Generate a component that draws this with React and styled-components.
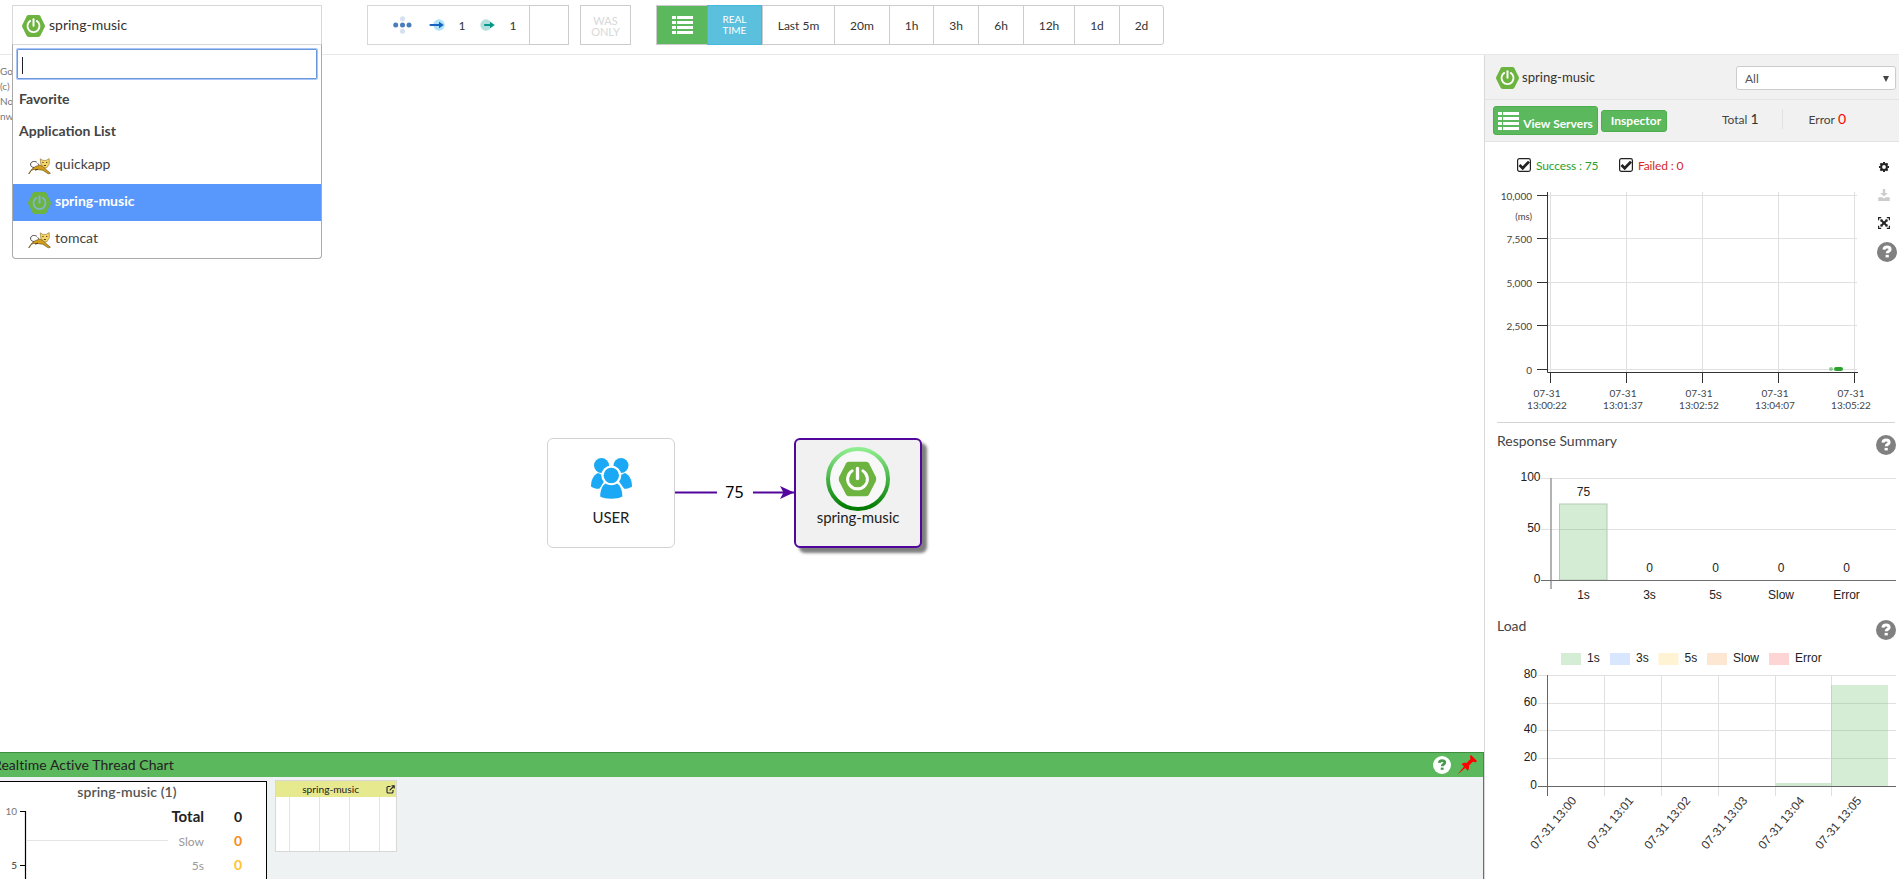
import React from "react";
import styled, { createGlobalStyle, css } from "styled-components";

const Global = createGlobalStyle`
  *, *::before, *::after { box-sizing: border-box; }
  html, body { margin: 0; height: 100%; overflow: hidden; }
  body { font-family: Lato, "Liberation Sans", sans-serif; font-size: 14px; color: #444; background: #fff; }
`;

const Page = styled.div`
  width: 1899px;
  height: 879px;
  display: flex;
  flex-direction: column;
  overflow: hidden;
`;

/* ---------- header ---------- */
const Header = styled.header`
  height: 55px;
  flex: none;
  display: flex;
  align-items: flex-start;
  padding: 5px 0 0 12px;
  border-bottom: 1px solid #e8e8e8;
`;

const AppSelect = styled.div`
  position: relative;
  width: 310px;
  height: 40px;
  z-index: 5;
`;

const AppCurrent = styled.div`
  height: 40px;
  display: flex;
  align-items: center;
  gap: 4px;
  padding: 2px 0 0 9px;
  border: 1px solid #d8d8d8;
  font-size: 14px;
  line-height: 20px;
  color: #333;

  span { margin-top: -2px; }
`;

const Menu = styled.div`
  position: absolute;
  top: 39px;
  left: 0;
  width: 310px;
  height: 215px;
  padding-top: 4px;
  background: #fff;
  border: 1px solid #aaa;
  border-top-color: #d8d8d8;
  border-radius: 0 0 4px 4px;
  overflow: hidden;
`;

const SearchBox = styled.div`
  width: 300px;
  height: 30px;
  margin-left: 4px;
  padding: 7px 0 0 4px;
  border: 1px solid #6c96dc;
  border-radius: 1px;
  box-shadow: 0 0 0 1px #a9c6f7;
`;

const Caret = styled.div`
  width: 1px;
  height: 17px;
  background: #222;
`;

const MenuGroup = styled.div`
  height: 32px;
  padding: 10px 0 0 6px;
  font-weight: 700;
  font-size: 14px;
  line-height: 20px;
`;

const MenuItem = styled.div`
  height: 37px;
  display: flex;
  align-items: center;
  gap: 4px;
  padding-left: 15px;
  line-height: 20px;
  ${(p) =>
    p.$active &&
    css`
      background: #5897fb;
      color: #fff;
      font-weight: 700;
    `}
  span { margin-top: -3px; }
  svg { margin-top: 1px; }
`;

const MenuItems = styled.div`
  padding-top: 4px;
`;

const CounterBox = styled.div`
  width: 202px;
  height: 40px;
  margin-left: 45px;
  display: flex;
  border: 1px solid #d8d8d8;
  font-size: 12px;
  color: #333;
`;

const Counters = styled.div`
  flex: 1;
  display: flex;
  align-items: center;
  padding-left: 25px;

  svg { flex: none; }
  span { width: 8px; text-align: center; }
  span + svg { margin-left: 14px; }
  svg + svg { margin-left: 17px; }
  svg + span { margin-left: 13px; }
`;

const EmptyCell = styled.div`
  width: 40px;
  height: 40px;
  margin: -1px;
  border: 1px solid #ccc;
`;

const WasOnly = styled.div`
  width: 51px;
  height: 40px;
  margin-left: 11px;
  padding-top: 9px;
  border: 1px solid #ccc;
  color: #d8d8d8;
  font-size: 11px;
  text-align: center;

  span { display: block; height: 11px; line-height: 11px; }
`;

const Periods = styled.div`
  display: flex;
  margin-left: 25px;
`;

const Period = styled.div`
  width: ${(p) => p.$w}px;
  height: 40px;
  display: flex;
  align-items: center;
  justify-content: center;
  border: 1px solid #ccc;
  border-right-width: ${(p) => (p.$last ? 1 : 0)}px;
  border-radius: ${(p) => (p.$last ? "0 3px 3px 0" : 0)};
  font-size: 12px;
  color: #333;
`;

const ListToggle = styled(Period)`
  background: #5cb85c;
`;

const RealTime = styled(Period)`
  background: #5bc0de;
  border: 1px solid #46b8da;
  color: #fff;
  font-size: 10px;
  line-height: 11px;
  text-align: center;
`;

/* ---------- body ---------- */
const Body = styled.div`
  flex: 1;
  display: flex;
  min-height: 0;
`;

const Main = styled.main`
  width: 1484px;
  flex: none;
  display: flex;
  flex-direction: column;
`;

const Canvas = styled.div`
  position: relative;
  height: 697px;
  flex: none;
  overflow: hidden;
`;

const Notice = styled.div`
  padding-top: 9px;
  font-size: 10px;
  line-height: 15px;
  width: 12px;
  overflow: hidden;
  color: #777;
  white-space: pre;
`;

const MapNode = styled.div`
  position: absolute;
  left: ${(p) => p.$x}px;
  top: ${(p) => p.$y}px;
  width: 128px;
  height: 110px;
  display: flex;
  flex-direction: column;
  align-items: center;
  padding-top: ${(p) => (p.$active ? 7 : 19)}px;
  border-radius: 6px;
  border: ${(p) => (p.$active ? "2px solid #53069b" : "1px solid #d3d3d3")};
  background: ${(p) => (p.$active ? "#f1f1f1" : "#fff")};
  box-shadow: ${(p) => (p.$active ? "5px 5px 3px rgba(0,0,0,0.5)" : "none")};
  font-size: 15px;
  line-height: 18px;
  color: #222;

  span {
    margin-top: ${(p) => (p.$active ? -3 : 9)}px;
    letter-spacing: -0.1px;
  }
`;

const LinkLine = styled.svg`
  position: absolute;
  left: 674px;
  top: 423px;
`;

const ThreadPanel = styled.section`
  flex: 1;
  display: flex;
  flex-direction: column;
  min-height: 0;
  border: 1px solid #3e8e41;
  border-left: 0;
  border-bottom: 0;
  background: #eef2f3;
`;

const ThreadHeader = styled.div`
  height: 24px;
  flex: none;
  display: flex;
  align-items: center;
  background: #5cb85c;
  color: #222;
  font-size: 14px;
  line-height: 20px;

  span { margin-left: -7px; flex: 1; white-space: pre; letter-spacing: 0.06px; }
  svg { flex: none; }
`;

const PinIcon = styled.svg`
  margin: 0 5px 0 5px;
`;

const ThreadBody = styled.div`
  display: flex;
  align-items: flex-start;
`;

const TotalCard = styled.div`
  width: 267px;
  height: 110px;
  margin-top: 4px;
  border: 1px solid #000;
  border-left: 0;
  border-bottom: 0;
  background: #fff;
`;

const AgentCard = styled.div`
  width: 122px;
  height: 72px;
  margin: 3px 0 0 8px;
  border: 1px solid #d8d8d8;
  background: #fff;
`;

const AgentTitle = styled.div`
  height: 16px;
  display: flex;
  align-items: center;
  justify-content: flex-end;
  gap: 27px;
  padding-right: 1px;
  background: #e7e98f;
  font-size: 10.2px;
  line-height: 16px;
  color: #222;
`;

const AgentGrid = styled.div`
  height: 54px;
  display: flex;
  padding-left: 13px;

  i { width: 30px; border-left: 1px solid #e3e3e3; }
  i:last-child { width: 17px; }
`;

/* ---------- sidebar ---------- */
const Sidebar = styled.aside`
  flex: 1;
  display: flex;
  flex-direction: column;
  border-left: 1px solid #d8d8d8;
  background: #fff;
  min-width: 0;
`;

const SideTitle = styled.div`
  height: 45px;
  flex: none;
  display: flex;
  align-items: center;
  padding: 2px 3px 0 11px;
  background: #f1f1f1;
  border-bottom: 1px solid #e4e4e4;

  > span { flex: 1; margin: -3px 0 0 3px; color: #333; font-size: 13.100px; line-height: 20px; }
`;

const Dropdown = styled.div`
  width: 160px;
  height: 24px;
  display: flex;
  align-items: center;
  justify-content: space-between;
  padding: 1px 6px 0 8px;
  border: 1px solid #ccc;
  border-radius: 3px;
  background: #fff;
  font-size: 12px;
  color: #555;
`;

const SideActions = styled.div`
  height: 42px;
  flex: none;
  display: flex;
  align-items: center;
  padding-left: 8px;
  background: #f1f1f1;
  border-bottom: 1px solid #e4e4e4;
`;

const GreenButton = styled.div`
  height: ${(p) => p.$h}px;
  width: ${(p) => p.$w}px;
  display: flex;
  align-items: center;
  justify-content: center;
  gap: 4px;
  margin-right: 3px;
  border: 1px solid #4cae4c;
  border-radius: 3px;
  background: #5cb85c;
  color: #fff;
  font-size: 12px;
  font-weight: 700;
  white-space: nowrap;

  span { margin-top: ${(p) => (p.$h > 25 ? 6 : 0)}px; margin-left: ${(p) => (p.$h > 25 ? 0 : 4)}px; }
`;

const Stat = styled.div`
  display: flex;
  align-items: baseline;
  gap: 3px;
  margin-left: ${(p) => p.$left}px;
  margin-top: -4px;
  font-size: 12px;
  color: #444;

  b { font-weight: 400; font-size: 14px; color: ${(p) => p.$color}; }
`;

const StatDivider = styled.div`
  width: 1px;
  height: 20px;
  margin: -4px 0 0 23px;
  background: #e2e2e2;
`;

const ScatterSection = styled.section`
  height: 281px;
  flex: none;
  display: flex;
  margin: 0 1px 0 12px;
`;

const ScatterMain = styled.div`
  width: 378px;
  flex: none;
`;

const Divider = styled.div`
  height: 1px;
  flex: none;
  margin: -1px 4px 0 12px;
  background: #d4d4d4;
`;

const Checks = styled.div`
  height: 38px;
  display: flex;
  align-items: center;
  padding: 8px 0 0 20px;
  font-size: 12px;
`;

const Check = styled.div`
  display: flex;
  align-items: center;
  gap: 5px;
  width: 102px;
  white-space: nowrap;
  letter-spacing: -0.15px;
  color: ${(p) => p.$color};
`;

const Tools = styled.div`
  width: 22px;
  display: flex;
  flex-direction: column;
  align-items: center;
  padding-top: 20px;
  margin-left: -2px;

  svg { flex: none; }
  svg:last-child { margin-left: 5px; }
`;

const SectionTitle = styled.div`
  height: ${(p) => p.$h}px;
  flex: none;
  display: flex;
  align-items: flex-start;
  justify-content: space-between;
  padding: ${(p) => p.$top}px 3px 0 12px;
  font-size: 14px;
  line-height: 18px;

  svg { margin-top: 3px; }
`;

const ChartSvg = styled.svg`
  display: block;
  flex: none;
`;

/* ---------- icons ---------- */
function SpringIcon({ width = 23, height = 22, power = "#fff" }) {
  return (
    <svg width={width} height={height} viewBox="0 0 46 43" preserveAspectRatio="none">
      <path
        d="M13 0h20q2.500 0 3.800 2.200l8.500 16.800q1.200 2.500 0 5l-8.500 16.800Q35.500 43 33 43H13q-2.500 0-3.800-2.200L.7 24q-1.200-2.500 0-5L9.200 2.200Q10.500 0 13 0Z"
        fill="#6db33f"
      />
      <path d="M16.500 11.500a12 12 0 1 0 13 0" fill="none" stroke={power} strokeWidth="3.600" strokeLinecap="round" />
      <path d="M23 8.500v12.500" stroke={power} strokeWidth="4" strokeLinecap="round" />
    </svg>
  );
}

function TomcatIcon() {
  return (
    <svg width="23" height="17" viewBox="0 0 23 17">
      <path d="M8.800 4.200C6 2.800 3 3.500 2.600 6c-.3 2 1.200 3.300 3.600 3.600" fill="none" stroke="#333" strokeWidth=".9" />
      <path d="M.6 15.600 4 11l3.500-2.500L12 7l4 2 2 2.600 4.400 3.600-2.200.6-5.400-3.600-5-.6-4.200-.2-2.600 1.200-1.600 3Z" fill="#d39e1b" stroke="#5b420c" strokeWidth=".6" />
      <path d="m12.200.8 2.700 1.600h3.200L21.200.6l.2 5-2.400 4-3 .2-3.200-3.700Z" fill="#f3d568" stroke="#7a5b15" strokeWidth=".5" />
      <path d="M14.300 4.500h1.300M18 4.500h1.300M15.800 7.500h2.200M7 12.200l3-1M9.500 5.500l1.500 1.200" stroke="#4b3609" strokeWidth=".9" />
    </svg>
  );
}

function ListIcon({ width = 21, height = 18 }) {
  return (
    <svg width={width} height={height} viewBox="0 0 21 18">
      {[0, 5, 10, 15].map((y) => (
        <g key={y} fill="#fff">
          <rect x="0" y={y} width="4" height="3" />
          <rect x="5" y={y} width="16" height="3" />
        </g>
      ))}
    </svg>
  );
}

function HelpIcon({ size = 20, fill = "#808080", mark = "#fff" }) {
  return (
    <svg width={size} height={size} viewBox="0 0 20 20">
      <circle cx="10" cy="10" r="10" fill={fill} />
      <path d="M7 7.600C7.100 5.900 8.300 5.100 10.100 5.100c1.800 0 3 .9 3 2.300 0 2-2.900 1.900-2.900 3.900" fill="none" stroke={mark} strokeWidth="3" />
      <rect x="8.600" y="12.900" width="3.200" height="2.500" fill={mark} />
    </svg>
  );
}

function CheckIcon() {
  return (
    <svg width="14" height="14" viewBox="0 0 14 14">
      <rect x=".6" y=".6" width="12.800" height="12.800" rx="1.800" fill="#fff" stroke="#222" strokeWidth="1.200" />
      <path d="m2.500 7 3.200 3.200 6.300-6.600" fill="none" stroke="#222" strokeWidth="2.800" />
    </svg>
  );
}

function GearIcon() {
  return (
    <svg width="10" height="10" viewBox="0 0 10 10">
      <circle cx="5" cy="5" r="2.900" fill="none" stroke="#222" strokeWidth="2" />
      <path d="M5 0v1.500M5 8.500V10M0 5h1.500M8.500 5H10M1.400 1.400l1.100 1.100M7.500 7.500l1.100 1.100M1.400 8.600l1.100-1.100M7.500 2.500l1.100-1.100" stroke="#222" strokeWidth="2" />
    </svg>
  );
}

function DownloadIcon() {
  return (
    <svg width="12" height="12" viewBox="0 0 12 12" fill="#ccc">
      <path d="M4.800 0h2.400v4h2.600L6 7.600 2.200 4h2.600Z" />
      <path d="M.3 8.300h4L6 9.500l1.700-1.200h4V12H.3Z" />
    </svg>
  );
}

function ExpandIcon() {
  return (
    <svg width="12" height="12" viewBox="0 0 12 12" fill="none" stroke="#222">
      <path d="M.6 3.200V.6h2.600M8.800.6h2.600v2.600M11.400 8.800v2.600H8.800M3.200 11.400H.6V8.800" strokeWidth="1.200" />
      <path d="m3.200 3.200 5.600 5.600M8.800 3.200 3.200 8.800" strokeWidth="2" />
      <path d="M2.700 4.500V2.700h1.800M7.500 2.700h1.800v1.800M9.300 7.500v1.800H7.500M4.500 9.300H2.700V7.500" strokeWidth=".8" />
    </svg>
  );
}

function NodesIcon() {
  return (
    <svg width="19" height="18" viewBox="0 0 19 18">
      <circle cx="9.500" cy="2.700" r="2.500" fill="#d5e0f0" />
      <circle cx="9.500" cy="15.300" r="2.500" fill="#d5e0f0" />
      {[2.7, 9.5, 16].map((x) => (
        <circle key={x} cx={x} cy="9" r="2.500" fill="#4a7ebb" />
      ))}
    </svg>
  );
}

function ArrowIcon({ halo, color, haloX }) {
  return (
    <svg width="16" height="12" viewBox="0 0 16 12">
      <circle cx={haloX} cy="6" r="5.700" fill={halo} />
      <path d={`M${haloX === 10 ? 1.500 : 5} 6H11`} stroke={color} strokeWidth="2.200" strokeLinecap="round" />
      <path d="m10 2.800 4.800 3.200-4.800 3.200Z" fill={color} />
    </svg>
  );
}

function UsersIcon() {
  return (
    <svg width="41" height="41" viewBox="0 0 41 41" fill="#1ba9f5">
      <circle cx="10.500" cy="7.500" r="7.500" />
      <circle cx="30" cy="7.500" r="7.500" />
      <path d="M7 15C2 17 0 23 0 28.500c3 2.200 7 2.700 10.500 2L18 20Z" />
      <path d="M34 15c5 2 7 8 7 13.500-3 2.200-7 2.700-10.500 2L23 20Z" />
      <circle cx="20.300" cy="17.500" r="10" fill="#fff" />
      <path d="M14 22h13l7 10-3 9H10L7 33Z" fill="#fff" />
      <circle cx="20.300" cy="17.500" r="7.700" />
      <path d="M14.500 25.500C11 27.500 9.200 33 9.200 38.500c5 3 17 3 22.200 0 0-5.500-1.800-11-5.300-13-3.500 2.300-8.100 2.300-11.600 0Z" />
    </svg>
  );
}

function SpringRing() {
  return (
    <svg width="64" height="64" viewBox="0 0 64 64">
      <defs>
        <linearGradient id="ring" x1="0" y1="0" x2="0" y2="1">
          <stop offset="0" stopColor="#90ee90" />
          <stop offset="1" stopColor="#007a00" />
        </linearGradient>
      </defs>
      <circle cx="32" cy="32" r="30" fill="#f8f8f8" stroke="url(#ring)" strokeWidth="4" />
      <g transform="translate(12.500 14.500)">
        <SpringIcon width={38} height={35} />
      </g>
    </svg>
  );
}

function ExternalIcon() {
  return (
    <svg width="9" height="9" viewBox="0 0 9 9" fill="none" stroke="#222" strokeWidth="1.100">
      <path d="M4.500 1.500H2.200Q1 1.500 1 2.700v4Q1 8 2.200 8h3.600Q7 8 7 6.700V5M3.700 5.300 8 1M5.500.8H8.200V3.500" />
    </svg>
  );
}

/* ---------- charts ---------- */
function ThreadChart() {
  return (
    <ChartSvg width="266" height="100" viewBox="0 782 266 100">
      <text x="127" y="797" textAnchor="middle" fontSize="14" fontWeight="600" fill="#555" letterSpacing="0.08">spring-music (1)</text>
      <path d="M20 811.500h5.500V882M20 865.500h5" fill="none" stroke="#000" strokeWidth="1.200" />
      <path d="M26 840.500h142" stroke="#e5e5e5" />
      <g fontSize="10" fill="#777" textAnchor="end">
        <text x="17" y="815">10</text>
        <text x="17" y="869" fill="#333">5</text>
      </g>
      <g fontSize="12" fill="#999" textAnchor="end">
        <text x="204" y="822" fontSize="15" fontWeight="700" fill="#222">Total</text>
        <text x="204" y="846">Slow</text>
        <text x="204" y="870">5s</text>
      </g>
      <g fontSize="14" fontWeight="700" textAnchor="middle">
        <text x="238" y="822" fill="#222">0</text>
        <text x="238" y="846" fill="#f58c23">0</text>
        <text x="238" y="870" fill="#ffc42e">0</text>
      </g>
    </ChartSvg>
  );
}

const scatterX = [
  [1550.5, "13:00:22"],
  [1626.5, "13:01:37"],
  [1702.5, "13:02:52"],
  [1778.5, "13:04:07"],
  [1854.5, "13:05:22"],
];
const scatterY = [
  [195.5, "10,000"],
  [238.5, "7,500"],
  [282.5, "5,000"],
  [325.5, "2,500"],
  [369.5, "0"],
];

function ScatterChart() {
  return (
    <ChartSvg width="378" height="240" viewBox="1497 180 378 240">
      {scatterY.map(([y, t]) => (
        <g key={t}>
          <path d={`M1548 ${y}H1857`} stroke="#e0e0e0" />
          <path d={`M1537 ${y}h10`} stroke="#333" />
          <text x="1532" y={y + 4.5} fontSize="10" fill="#444" textAnchor="end">{t}</text>
        </g>
      ))}
      <text x="1532" y="220" fontSize="9.500" fill="#444" textAnchor="end">(ms)</text>
      {scatterX.map(([x, t]) => (
        <g key={t} fontSize="10" fill="#444" textAnchor="middle">
          <path d={`M${x} 192V372`} stroke="#e0e0e0" />
          <path d={`M${x} 373v10`} stroke="#333" />
          <text x={x - 3.500} y="397">07-31</text>
          <text x={x - 3.500} y="409">{t}</text>
        </g>
      ))}
      <path d="M1547.500 192V372.500H1858" fill="none" stroke="#333" />
      <circle cx="1831" cy="369" r="2" fill="#2ca02c" opacity=".5" />
      <rect x="1834" y="367" width="9" height="4" rx="2" fill="#2ca02c" />
    </ChartSvg>
  );
}

const sans = '"Liberation Sans", sans-serif';
const summary = [
  [1583.5, "1s", 75],
  [1649.5, "3s", 0],
  [1715.5, "5s", 0],
  [1781, "Slow", 0],
  [1846.5, "Error", 0],
];

function SummaryChart() {
  return (
    <ChartSvg width="414" height="144" viewBox="1485 465 414 144" fontFamily={sans} fontSize="12" fill="#222">
      <path d="M1541 478.500H1896M1541 529.500H1896" stroke="#e2e2e2" />
      <rect x="1559.500" y="504" width="47.500" height="76" fill="#d4ecd4" stroke="#b4c9b4" />
      <path d="M1560 529.500h47" stroke="#bcd2bc" />
      <path d="M1551 478v111" stroke="#999" strokeWidth="1.500" />
      <path d="M1541 580.500H1896" stroke="#6f6f6f" />
      <g textAnchor="end">
        <text x="1540.500" y="481">100</text>
        <text x="1540.500" y="532">50</text>
        <text x="1540.500" y="583">0</text>
      </g>
      {summary.map(([x, label, v]) => (
        <g key={label} textAnchor="middle">
          <text x={x} y={v ? 496 : 572}>{v}</text>
          <text x={x} y="599">{label}</text>
        </g>
      ))}
    </ChartSvg>
  );
}

const legend = [
  [1561, "1s", "#d5edd5"],
  [1610, "3s", "#d8e6ff"],
  [1658.5, "5s", "#fff3d3"],
  [1707, "Slow", "#fde6d2"],
  [1769, "Error", "#fdd5d5"],
];
const loadX = [1547.5, 1604.5, 1661.5, 1718.5, 1775.5, 1831.5];
const loadY = [
  [675.5, 80],
  [703.5, 60],
  [730.5, 40],
  [758.5, 20],
  [786.5, 0],
];

function LoadChart() {
  return (
    <ChartSvg width="414" height="229" viewBox="1485 650 414 229" fontFamily={sans} fontSize="12" fill="#222">
      {legend.map(([x, label, color]) => (
        <g key={label}>
          <rect x={x} y="653" width="20" height="12" fill={color} />
          <text x={x + 26} y="662">{label}</text>
        </g>
      ))}
      {loadY.map(([y, t]) => (
        <g key={t}>
          <path d={`M1538 ${y}H1896`} stroke="#e0e0e0" />
          <text x="1537" y={y + 2.500} textAnchor="end">{t}</text>
        </g>
      ))}
      {loadX.map((x, i) => (
        <g key={x}>
          <path d={`M${x} 675V796`} stroke="#e0e0e0" />
          <text transform={`translate(${1577 + i * 57} 801) rotate(-50)`} textAnchor="end" fill="#333">{`07-31 13:0${i}`}</text>
        </g>
      ))}
      <rect x="1775" y="783" width="56.500" height="3" fill="#d0e8d0" />
      <rect x="1831" y="685" width="57" height="101" fill="#d5edd5" />
      <path d="M1831 703.500h57M1831 730.500h57M1831 758.500h57M1831.500 685v101" stroke="#bfd7bf" />
      <path d="M1547.500 675V796M1538 786.500H1896" stroke="#666" />
    </ChartSvg>
  );
}

/* ---------- app ---------- */
const periods = [
  ["Last 5m", 72],
  ["20m", 55],
  ["1h", 44],
  ["3h", 45],
  ["6h", 45],
  ["12h", 51],
  ["1d", 45],
  ["2d", 45],
];

export default function App() {
  return (
    <Page>
      <Global />
      <Header>
        <AppSelect>
          <AppCurrent>
            <SpringIcon />
            <span>spring-music</span>
          </AppCurrent>
          <Menu>
            <SearchBox>
              <Caret />
            </SearchBox>
            <MenuGroup>Favorite</MenuGroup>
            <MenuGroup>Application List</MenuGroup>
            <MenuItems>
              <MenuItem>
                <TomcatIcon />
                <span>quickapp</span>
              </MenuItem>
              <MenuItem $active>
                <SpringIcon power="#7fb6c4" />
                <span>spring-music</span>
              </MenuItem>
              <MenuItem>
                <TomcatIcon />
                <span>tomcat</span>
              </MenuItem>
            </MenuItems>
          </Menu>
        </AppSelect>
        <CounterBox>
          <Counters>
            <NodesIcon />
            <ArrowIcon halo="#aee3f8" color="#1565c0" haloX={10} />
            <span>1</span>
            <ArrowIcon halo="#b2dfdb" color="#009688" haloX={6} />
            <span>1</span>
          </Counters>
          <EmptyCell />
        </CounterBox>
        <WasOnly>
          <span>WAS</span>
          <span>ONLY</span>
        </WasOnly>
        <Periods>
          <ListToggle $w={51}>
            <ListIcon />
          </ListToggle>
          <RealTime $w={55}>
            REAL
            <br />
            TIME
          </RealTime>
          {periods.map(([label, w], i) => (
            <Period key={label} $w={w} $last={i === periods.length - 1}>
              {label}
            </Period>
          ))}
        </Periods>
      </Header>
      <Body>
        <Main>
          <Canvas>
            <Notice>{"Go\n(c)\nNo\nnw"}</Notice>
            <LinkLine width="121" height="30" viewBox="674 478 121 30">
              <path d="M675 492.500h42M753 492.500h42" stroke="#53069b" strokeWidth="2" />
              <path d="m780 486 14 6.500-14 6.500 3.500-6.500Z" fill="#53069b" />
              <text x="734.500" y="498" textAnchor="middle" fontFamily='"Noto Sans", sans-serif' fontSize="16" fill="#000">75</text>
            </LinkLine>
            <MapNode $x={547} $y={383}>
              <UsersIcon />
              <span>USER</span>
            </MapNode>
            <MapNode $x={794} $y={383} $active>
              <SpringRing />
              <span>spring-music</span>
            </MapNode>
          </Canvas>
          <ThreadPanel>
            <ThreadHeader>
              <span>Realtime Active Thread Chart</span>
              <HelpIcon size={18} fill="#fff" mark="#4a9a4c" />
              <PinIcon width="22" height="22" viewBox="0 0 22 22">
                <path d="M1.500 20.500 8 12.500 5.500 10q2.500-2 5-1l4-4-.5-3L15 1l6 6-1.200 1.200-3-.5-4 4q1 2.500-1 5L9.200 14Z" fill="#f00" />
              </PinIcon>
            </ThreadHeader>
            <ThreadBody>
              <TotalCard>
                <ThreadChart />
              </TotalCard>
              <AgentCard>
                <AgentTitle>
                  <span>spring-music</span>
                  <ExternalIcon />
                </AgentTitle>
                <AgentGrid>
                  <i />
                  <i />
                  <i />
                  <i />
                </AgentGrid>
              </AgentCard>
            </ThreadBody>
          </ThreadPanel>
        </Main>
        <Sidebar>
          <SideTitle>
            <SpringIcon />
            <span>spring-music</span>
            <Dropdown>
              All
              <svg width="6" height="6" viewBox="0 0 6 6">
                <path d="M0 0h6L3 6Z" fill="#444" />
              </svg>
            </Dropdown>
          </SideTitle>
          <SideActions>
            <GreenButton $w={105} $h={29}>
              <ListIcon />
              <span>View Servers</span>
            </GreenButton>
            <GreenButton $w={66} $h={22}>
              <span>Inspector</span>
            </GreenButton>
            <Stat $left={52} $color="#333">
              Total <b>1</b>
            </Stat>
            <StatDivider />
            <Stat $left={26} $color="#f00">
              Error <b>0</b>
            </Stat>
          </SideActions>
          <ScatterSection>
            <ScatterMain>
              <Checks>
                <Check $color="#2ca02c">
                  <CheckIcon />
                  Success : 75
                </Check>
                <Check $color="#d62728">
                  <CheckIcon />
                  Failed : 0
                </Check>
              </Checks>
              <ScatterChart />
            </ScatterMain>
            <Tools>
              <GearIcon />
              <svg width="1" height="17" />
              <DownloadIcon />
              <svg width="1" height="16" />
              <ExpandIcon />
              <svg width="1" height="13" />
              <HelpIcon />
            </Tools>
          </ScatterSection>
          <Divider />
          <SectionTitle $h={42} $top={9}>
            Response Summary
            <HelpIcon />
          </SectionTitle>
          <SummaryChart />
          <SectionTitle $h={41} $top={8}>
            Load
            <HelpIcon />
          </SectionTitle>
          <LoadChart />
        </Sidebar>
      </Body>
    </Page>
  );
}
